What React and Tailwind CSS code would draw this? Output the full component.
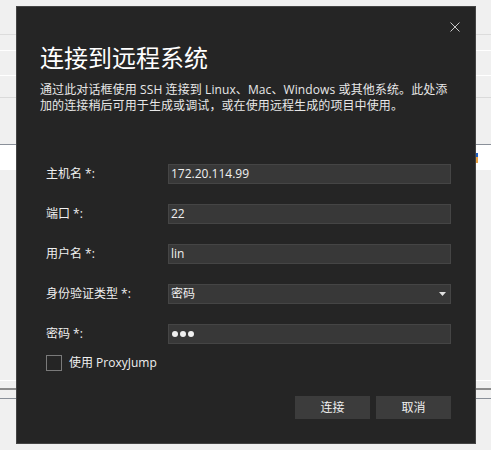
import React from "react";

const font = { fontFamily: '"Open Sans", "Noto Sans CJK SC", sans-serif' };

function Field({ label, children }) {
  return (
    <div className="grid grid-cols-[122px_283px] items-center h-[20px]">
      <div className="text-[12px] leading-[20px] text-[#f0f0f0]">{label}</div>
      {children}
    </div>
  );
}

function Input({ value, password }) {
  return (
    <div className="h-[20px] bg-[#383838] border border-[#454545] flex items-center pl-[2px] text-[12px] text-[#f0f0f0] leading-[18px]">
      {password ? (
        <div className="flex gap-[2px] pl-[1px]">
          <div className="w-[6px] h-[6px] rounded-full bg-[#f0f0f0]" />
          <div className="w-[6px] h-[6px] rounded-full bg-[#f0f0f0]" />
          <div className="w-[6px] h-[6px] rounded-full bg-[#f0f0f0]" />
        </div>
      ) : (
        value
      )}
    </div>
  );
}

export default function App() {
  return (
    <div className="relative w-[491px] h-[450px] overflow-hidden bg-[#f0f0f0]" style={font}>
      {/* background page */}
      <div className="flex flex-col">
        <div className="h-[34px]" />
        <div className="h-px bg-[#dcdcdc]" />
        <div className="h-[15px]" />
        <div className="h-px bg-white" />
        <div className="h-[24px]" />
        <div className="h-px bg-white" />
        <div className="h-[21px]" />
        <div className="h-px bg-[#dadada]" />
        <div className="h-[46px]" />
        <div className="h-px bg-[#8a9099]" />
        <div className="h-[25px] bg-white pl-[472px] pt-[8px]">
          <div className="w-[6px] h-[10px] flex flex-col">
            <div className="h-[4px] bg-[#1f5fbf]" />
            <div className="h-[6px] bg-[#e8a040]" />
          </div>
        </div>
        <div className="h-[210px]" />
        <div className="h-px bg-white" />
        <div className="h-[7px]" />
        <div className="h-[2px] bg-[#8c8c8c]" />
        <div className="h-[8px]" />
        <div className="h-px bg-[#8a9099]" />
      </div>

      {/* dialog */}
      <div className="absolute left-[16px] top-[6px] w-[460px] h-[438px] border border-[#444444] bg-[#252525] flex flex-col">
        <div className="flex justify-end pr-[15px] pt-[15px] h-[35px]">
          <svg width="10" height="10" viewBox="0 0 10 10">
            <path d="M0.5 0.5 L9.5 9.5 M9.5 0.5 L0.5 9.5" stroke="#c8c8c8" strokeWidth="1" />
          </svg>
        </div>
        <div className="pl-[23px] text-[24px] leading-[32px] text-white">连接到远程系统</div>
        <div className="pl-[23px] mt-[8px] text-[12px] leading-[16px] text-[#e8e8e8] tracking-[0.1px]">
          <div>通过此对话框使用 SSH 连接到 Linux、Mac、Windows 或其他系统。此处添</div>
          <div>加的连接稍后可用于生成或调试，或在使用远程生成的项目中使用。</div>
        </div>
        <div className="pl-[29px] mt-[50px] flex flex-col gap-[20px]">
          <Field label="主机名 *:">
            <Input value="172.20.114.99" />
          </Field>
          <Field label="端口 *:">
            <Input value="22" />
          </Field>
          <Field label="用户名 *:">
            <Input value="lin" />
          </Field>
          <Field label="身份验证类型 *:">
            <div className="h-[20px] bg-[#383838] border border-[#454545] flex items-center justify-between pl-[2px] pr-[4px] text-[12px] text-[#f0f0f0]">
              <span>密码</span>
              <svg width="7" height="4" viewBox="0 0 7 4">
                <path d="M0 0 H7 L3.5 4 Z" fill="#e0e0e0" />
              </svg>
            </div>
          </Field>
          <Field label="密码 *:">
            <Input password />
          </Field>
        </div>
        <div className="pl-[29px] mt-[11px] flex items-center gap-[7px]">
          <div className="w-[16px] h-[16px] border border-[#7a7a7a] bg-[#252525]" />
          <span className="text-[12px] leading-[16px] text-[#f0f0f0]">使用 ProxyJump</span>
        </div>
        <div className="flex justify-end gap-[6px] pr-[24px] mt-[25px]">
          <button className="w-[75px] h-[23px] bg-[#3c3c3c] text-[12px] text-[#f0f0f0]">连接</button>
          <button className="w-[75px] h-[23px] bg-[#3c3c3c] text-[12px] text-[#f0f0f0]">取消</button>
        </div>
      </div>
    </div>
  );
}
